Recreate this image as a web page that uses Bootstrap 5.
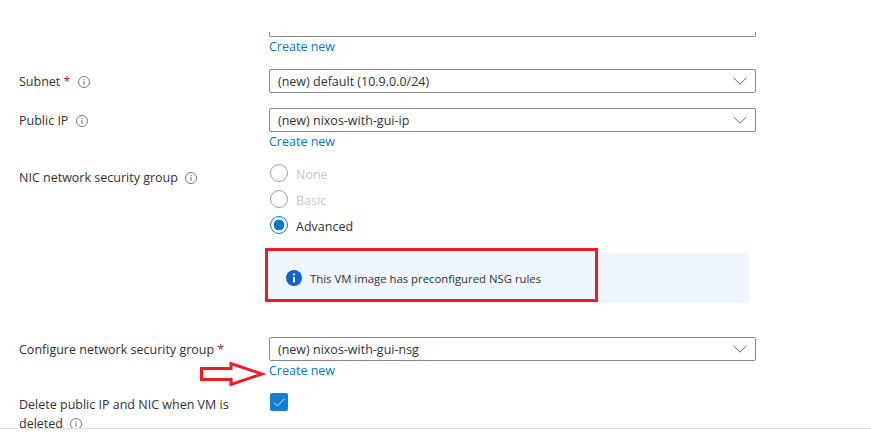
<!DOCTYPE html>
<html lang="en">
<head>
  <meta charset="UTF-8">
  <title>Create a virtual machine</title>
  <link href="https://cdn.jsdelivr.net/npm/bootstrap@5.3.0/dist/css/bootstrap.min.css" rel="stylesheet">
  <style>
    body {
      background: #fff;
      color: #323130;
      font-family: "Open Sans", "Noto Sans", sans-serif;
      font-size: 12.5px;
      line-height: 18px;
      overflow: hidden;
    }
    .blade {
      position: relative;
      height: 429px;
      overflow: hidden;
      border-bottom: 1px solid #dcdcdc;
      padding-left: 19px;
    }
    .label-col { width: 250px; flex: none; }
    .field-col { width: 487px; flex: none; }
    .field-row { margin-top: 14px; }
    .field-row.gap-15 { margin-top: 15px; }
    .field-row.gap-34 { margin-top: 34px; }
    .select-stub {
      height: 5px;
      margin-top: 32px;
      border: 1px solid #8a8886;
      border-top: 0;
      border-radius: 0 0 2px 2px;
    }
    .create-link { display: block; height: 18px; line-height: 20px; color: #0078d4; text-decoration: none; }
    .req { color: #a4262c; }
    .info-dot { width: 12px; height: 12px; margin-left: 4px; vertical-align: -2px; }
    .azure-select.form-select {
      height: 24px;
      min-height: 0;
      padding: 2px 30px 0 8px;
      border: 1px solid #8a8886;
      border-radius: 2px;
      color: #323130;
      font-size: 12.5px;
      line-height: 20px;
      background-image: url("data:image/svg+xml,%3Csvg xmlns='http://www.w3.org/2000/svg' viewBox='0 0 14 8'%3E%3Cpath d='M.5.8 7 7.2 13.5.8' fill='none' stroke='%23605e5c'/%3E%3C/svg%3E");
      background-size: 14px 8px;
      background-position: right 8px center;
    }
    .label-nudge { padding-top: 5px; }
    .label-nudge-delete { padding-top: 2px; line-height: 19px; }
    .label-middle { height: 24px; line-height: 26px; }
    .radio-stack { display: flex; flex-direction: column; gap: 8px; }
    .radio-line { display: flex; align-items: center; gap: 8px; margin: 0; padding: 0; min-height: 18px; padding-left: 1px; height: 18px; }
    .radio-line .form-check-input {
      float: none;
      width: 18px;
      height: 18px;
      margin: 0;
      border: 1px solid #a19f9d;
      opacity: 1;
    }
    .radio-line .form-check-input:checked {
      background-color: #fff;
      border-color: #0078d4;
      background-image: radial-gradient(circle, #0078d4 0, #0078d4 5px, #fff 5.6px);
    }
    .radio-line .form-check-label { opacity: 1; padding-top: 4px; }
    .radio-off { color: #8f8d8b; }
    .nsg-note {
      display: flex;
      align-items: center;
      gap: 8px;
      width: 480px;
      height: 50px;
      margin-top: 19px;
      padding-left: 17px;
      background: #eff6fe;
      border-radius: 2px;
      font-size: 11.35px;
    }
    .nsg-note span { padding-top: 2px; }
    .azure-check.form-check-input {
      width: 18px;
      height: 18px;
      margin: 0 0 0 1px;
      float: none;
      border: 0;
      border-radius: 2px;
      background-color: #1380d8;
      background-image: url("data:image/svg+xml,%3Csvg xmlns='http://www.w3.org/2000/svg' viewBox='0 0 18 18'%3E%3Cpath d='M4 9.5 7.5 13 14.5 5.5' fill='none' stroke='%23e8f2fb' stroke-width='.9'/%3E%3C/svg%3E");
      background-size: 18px 18px;
    }
    .red-frame {
      position: absolute;
      left: 265px;
      top: 248px;
      width: 333px;
      height: 54px;
      border: 3px solid #ed1c24;
      pointer-events: none;
    }
    .red-arrow { position: absolute; left: 199px; top: 360px; }
  </style>
</head>
<body>

<div class="blade">
  <div class="d-flex">
    <div class="label-col"></div>
    <div class="field-col">
      <div class="select-stub"></div>
      <a class="create-link" href="#">Create new</a>
    </div>
  </div>

  <div class="d-flex field-row">
    <div class="label-col label-middle">Subnet <span class="req">*</span>
      <svg class="info-dot" viewBox="0 0 12 12"><circle cx="6" cy="6" r="5.5" fill="none" stroke="#7a7876"/><path d="M6 5.2v3.6M6 3v1.1" stroke="#605e5c" fill="none"/></svg>
    </div>
    <div class="field-col">
      <select class="form-select azure-select"><option>(new) default (10.9.0.0/24)</option></select>
    </div>
  </div>

  <div class="d-flex field-row gap-15">
    <div class="label-col label-middle">Public IP
      <svg class="info-dot" viewBox="0 0 12 12"><circle cx="6" cy="6" r="5.5" fill="none" stroke="#7a7876"/><path d="M6 5.2v3.6M6 3v1.1" stroke="#605e5c" fill="none"/></svg>
    </div>
    <div class="field-col">
      <select class="form-select azure-select"><option>(new) nixos-with-gui-ip</option></select>
      <a class="create-link" href="#">Create new</a>
    </div>
  </div>

  <div class="d-flex field-row">
    <div class="label-col label-nudge">NIC network security group
      <svg class="info-dot" viewBox="0 0 12 12"><circle cx="6" cy="6" r="5.5" fill="none" stroke="#7a7876"/><path d="M6 5.2v3.6M6 3v1.1" stroke="#605e5c" fill="none"/></svg>
    </div>
    <div class="field-col">
      <div class="radio-stack">
        <div class="form-check radio-line">
          <input class="form-check-input" type="radio" name="nsg" id="nsgNone" disabled>
          <label class="form-check-label radio-off" for="nsgNone">None</label>
        </div>
        <div class="form-check radio-line">
          <input class="form-check-input" type="radio" name="nsg" id="nsgBasic" disabled>
          <label class="form-check-label radio-off" for="nsgBasic">Basic</label>
        </div>
        <div class="form-check radio-line">
          <input class="form-check-input" type="radio" name="nsg" id="nsgAdvanced" checked>
          <label class="form-check-label" for="nsgAdvanced">Advanced</label>
        </div>
      </div>
      <div class="nsg-note">
        <svg width="16" height="16" viewBox="0 0 16 16"><circle cx="8" cy="8" r="8" fill="#0f62d6"/><circle cx="8" cy="4.4" r="1.1" fill="#fff"/><path d="M8 7v5.4" stroke="#fff" stroke-width="2"/></svg>
        <span>This VM image has preconfigured NSG rules</span>
      </div>
    </div>
  </div>

  <div class="d-flex field-row gap-34">
    <div class="label-col label-middle">Configure network security group <span class="req">*</span></div>
    <div class="field-col">
      <select class="form-select azure-select"><option>(new) nixos-with-gui-nsg</option></select>
      <a class="create-link" href="#">Create new</a>
    </div>
  </div>

  <div class="d-flex field-row">
    <div class="label-col label-nudge-delete">Delete public IP and NIC when VM is deleted
      <svg class="info-dot" viewBox="0 0 12 12"><circle cx="6" cy="6" r="5.5" fill="none" stroke="#7a7876"/><path d="M6 5.2v3.6M6 3v1.1" stroke="#605e5c" fill="none"/></svg>
    </div>
    <div class="field-col">
      <input class="form-check-input azure-check d-block" type="checkbox" checked>
    </div>
  </div>

  <div class="red-frame"></div>
  <svg class="red-arrow" width="68" height="28" viewBox="0 0 68 28">
    <path d="M2.5 8.5H32V3.5L63 14 32 24.5V19.5H2.5Z" fill="#fff" stroke="#ed1c24" stroke-width="3"/>
  </svg>
</div>

<script src="https://cdn.jsdelivr.net/npm/bootstrap@5.3.0/dist/js/bootstrap.bundle.min.js"></script>
</body>
</html>
